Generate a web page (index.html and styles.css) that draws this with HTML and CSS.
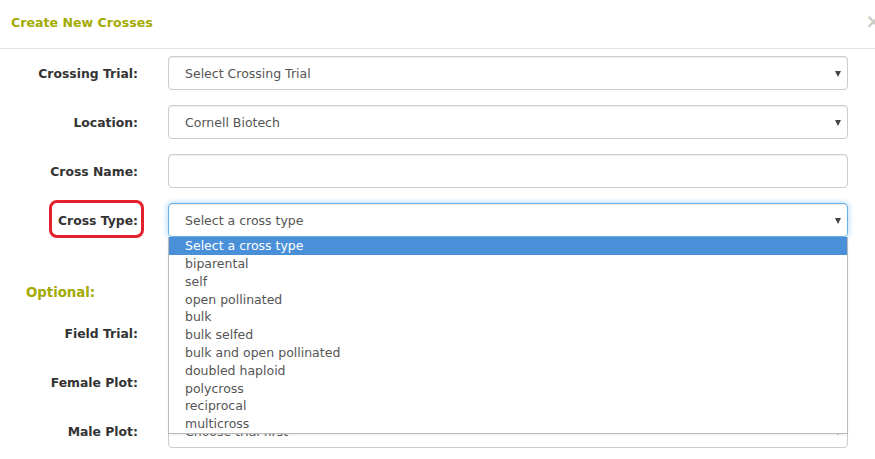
FILE: index.html
```html
<!DOCTYPE html>
<html>
<head>
<meta charset="utf-8">
<link rel="stylesheet" href="styles.css">
</head>
<body>
<div class="modal">
  <div class="modal-header">
    <h4 class="title">Create New Crosses</h4>
    <span class="close">×</span>
  </div>
  <div class="modal-body">
    <div class="row">
      <label class="label">Crossing Trial:</label>
      <div class="control select"><span class="value">Select Crossing Trial</span><span class="caret"></span></div>
    </div>
    <div class="row">
      <label class="label">Location:</label>
      <div class="control select"><span class="value">Cornell Biotech</span><span class="caret"></span></div>
    </div>
    <div class="row">
      <label class="label">Cross Name:</label>
      <div class="control"></div>
    </div>
    <div class="row">
      <label class="label"><span class="highlight">Cross Type:</span></label>
      <div class="control select focus"><span class="value">Select a cross type</span><span class="caret"></span></div>
    </div>
    <h4 class="optional">Optional:</h4>
    <div class="row">
      <label class="label">Field Trial:</label>
      <div class="control select"><span class="value"></span><span class="caret"></span></div>
    </div>
    <div class="row">
      <label class="label">Female Plot:</label>
      <div class="control select"><span class="value"></span><span class="caret"></span></div>
    </div>
    <div class="row">
      <label class="label">Male Plot:</label>
      <div class="control select"><span class="value male">Choose trial first</span><span class="caret"></span></div>
    </div>
  </div>
  <ul class="dropdown">
    <li class="selected">Select a cross type</li>
    <li>biparental</li>
    <li>self</li>
    <li>open pollinated</li>
    <li>bulk</li>
    <li>bulk selfed</li>
    <li>bulk and open pollinated</li>
    <li>doubled haploid</li>
    <li>polycross</li>
    <li>reciprocal</li>
    <li>multicross</li>
  </ul>
</div>
</body>
</html>
```

FILE: styles.css
```css
html, body {
  margin: 0;
  padding: 0;
  background: #fff;
  overflow: hidden;
}
body {
  width: 875px;
  height: 459px;
  font-family: "DejaVu Sans", sans-serif;
  font-size: 12.5px;
  color: #333;
}
.modal {
  position: relative;
  width: 875px;
  height: 459px;
}
.modal-header {
  height: 48px;
  border-bottom: 1px solid #e5e5e5;
  display: flex;
  align-items: center;
  justify-content: space-between;
  padding-left: 11px;
  box-sizing: content-box;
}
.title {
  margin: 0;
  font-size: 12.6px;
  font-weight: bold;
  color: #a3aa00;
  line-height: 18px;
  padding-bottom: 3px;
}
.close {
  font-size: 20px;
  font-weight: bold;
  color: #000;
  opacity: 0.2;
  margin-right: -7px;
  line-height: 1;
  padding-bottom: 6px;
}
.modal-body {
  padding: 7px 27px 0 0;
  display: flex;
  flex-direction: column;
}
.row {
  display: grid;
  grid-template-columns: 138px 680px;
  column-gap: 30px;
  align-items: center;
  height: 34px;
  margin-bottom: 15px;
}
.label {
  text-align: right;
  font-weight: bold;
  font-size: 12.4px;
  color: #333;
  position: relative;
}
.highlight {
  position: relative;
}
.highlight::before {
  content: "";
  position: absolute;
  left: -9px;
  right: -6px;
  top: -13px;
  bottom: -10px;
  border: 3px solid #e3202c;
  border-radius: 8px;
}
.control {
  height: 34px;
  box-sizing: border-box;
  border: 1px solid #ccc;
  border-radius: 4px;
  box-shadow: inset 0 1px 1px rgba(0,0,0,0.075);
  display: flex;
  align-items: center;
  justify-content: space-between;
  padding: 0 6px 0 16px;
  color: #555;
}
.control.focus {
  border-color: #66afe9;
  box-shadow: inset 0 1px 1px rgba(0,0,0,.075), 0 0 6px rgba(102,175,233,.6);
}
.caret {
  width: 0;
  height: 0;
  border-left: 3.5px solid transparent;
  border-right: 3.5px solid transparent;
  border-top: 6px solid #444;
  margin-top: 2px;
}
.optional {
  margin: 33px 0 15px 26px;
  font-size: 13.3px;
  font-weight: bold;
  color: #a3aa00;
  line-height: 16px;
}
.dropdown {
  position: absolute;
  left: 168px;
  top: 237px;
  width: 680px;
  height: 197px;
  box-sizing: border-box;
  margin: 0;
  padding: 0;
  list-style: none;
  background: #fff;
  border: 1px solid #bbb;
  border-top: none;
  box-shadow: 0 1px 2px rgba(0,0,0,0.08);
}
.dropdown li {
  height: 17.8px;
  line-height: 17.8px;
  padding-left: 16px;
  color: #555;
}
.dropdown li.selected {
  background: #4a90d9;
  color: #fff;
  height: 18px;
}
```
